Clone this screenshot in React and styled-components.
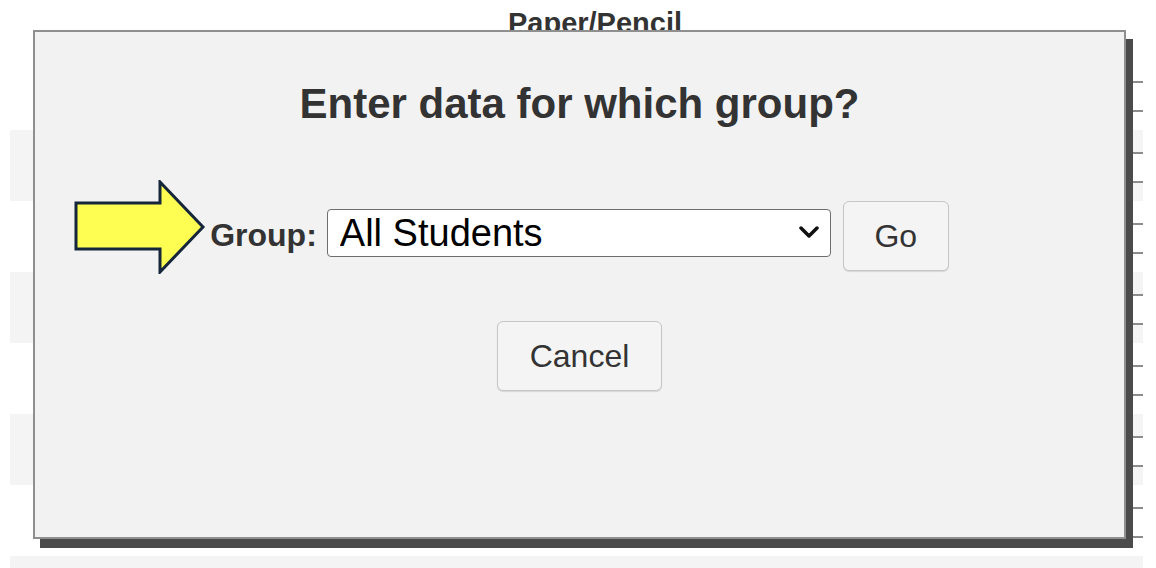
import React from 'react'
import styled, { createGlobalStyle } from 'styled-components'

const GlobalStyle = createGlobalStyle`
  html, body {
    margin: 0;
    padding: 0;
    background: #ffffff;
    font-family: "Liberation Sans", Arial, sans-serif;
    overflow: hidden;
  }
`;

const Page = styled.div`
  position: relative;
  width: 1156px;
  height: 568px;
  padding: 0 13px 0 10px;
  box-sizing: border-box;
  overflow: hidden;
`;

const Table = styled.div`
  display: flex;
  flex-direction: column;
  width: 1133px;
`;

const HeaderRow = styled.div`
  display: grid;
  grid-template-columns: 375px 420px 1fr;
  height: 59px;
`;

const HeaderCell = styled.div`
  grid-column: 2;
  text-align: center;
  font-size: 29px;
  font-weight: bold;
  color: #333;
  padding-top: 7px;
`;

const Row = styled.div`
  display: flex;
  align-items: center;
  justify-content: flex-end;
  height: 71px;
  background: ${p => (p.$shaded ? '#f4f4f4' : '#ffffff')};
`;

const ScoreBox = styled.div`
  width: 80px;
  height: 27px;
  margin-top: 3px;
  background: #fff;
  border-top: 2px solid #8c8c8c;
  border-bottom: 2px solid #8c8c8c;
`;

const Dialog = styled.div`
  position: absolute;
  top: 30px;
  left: 33px;
  width: 1093px;
  height: 509px;
  box-sizing: border-box;
  background: #f2f2f2;
  border: 2px solid #8f8f8f;
  box-shadow: 7px 9px 0 #4b4b4b;
  display: flex;
  flex-direction: column;
  align-items: center;
  padding-top: 48px;
`;

const Title = styled.h2`
  margin: 0;
  font-size: 42px;
  line-height: 48px;
  font-weight: bold;
  color: #333;
`;

const FormRow = styled.div`
  display: flex;
  align-items: center;
  margin-top: 73px;
  height: 70px;
`;

const Label = styled.label`
  position: relative;
  font-size: 32px;
  font-weight: bold;
  color: #333;
  margin-right: 10px;
  margin-top: -2px;
`;

const Pointer = styled.svg`
  position: absolute;
  right: 100%;
  top: 50%;
  margin-right: 4px;
  margin-top: -55px;
`;

const SelectWrap = styled.div`
  position: relative;
  margin-top: -6px;
`;

const Select = styled.select`
  appearance: none;
  -webkit-appearance: none;
  width: 504px;
  height: 48px;
  box-sizing: border-box;
  padding: 0 40px 0 12px;
  font-family: "Liberation Sans", Arial, sans-serif;
  font-size: 38px;
  color: #000;
  background: #fff;
  border: 1.5px solid #6e6e6e;
  border-radius: 4px;
  outline: none;
`;

const Chevron = styled.svg`
  position: absolute;
  right: 12px;
  top: 17px;
  pointer-events: none;
`;

const Button = styled.button`
  width: ${p => p.$w}px;
  height: 70px;
  margin-left: ${p => p.$ml || 0}px;
  font-family: "Liberation Sans", Arial, sans-serif;
  font-size: 32px;
  color: #333;
  background: #f4f4f4;
  border: 1px solid #c6c6c6;
  border-radius: 6px;
  box-shadow: 0 1px 1px rgba(0, 0, 0, 0.12);
  cursor: pointer;
`;

const CancelRow = styled.div`
  margin-top: 50px;
`;

const rows = [false, true, false, true, false, true, false, true];

export default function App() {
  return (
    <>
      <GlobalStyle />
      <Page>
        <Table>
          <HeaderRow>
            <HeaderCell>Paper/Pencil</HeaderCell>
          </HeaderRow>
          {rows.map((shaded, i) => (
            <Row key={i} $shaded={shaded}>
              <ScoreBox />
            </Row>
          ))}
        </Table>

        <Dialog>
          <Title>Enter data for which group?</Title>
          <FormRow>
            <Label>
              <Pointer width="132" height="94" viewBox="0 0 132 94">
                <path
                  d="M2 23 H86 V2 L129 47 L86 92 V69 H2 Z"
                  fill="#fdfd52"
                  stroke="#15263a"
                  strokeWidth="3"
                  strokeLinejoin="miter"
                />
              </Pointer>
              Group:
            </Label>
            <SelectWrap>
              <Select defaultValue="all">
                <option value="all">All Students</option>
              </Select>
              <Chevron width="20" height="13" viewBox="0 0 20 13">
                <path d="M2 2 L10 10 L18 2" fill="none" stroke="#111" strokeWidth="3.5" strokeLinecap="round" strokeLinejoin="round" />
              </Chevron>
            </SelectWrap>
            <Button $w={106} $ml={12}>Go</Button>
          </FormRow>
          <CancelRow>
            <Button $w={165}>Cancel</Button>
          </CancelRow>
        </Dialog>
      </Page>
    </>
  )
}
